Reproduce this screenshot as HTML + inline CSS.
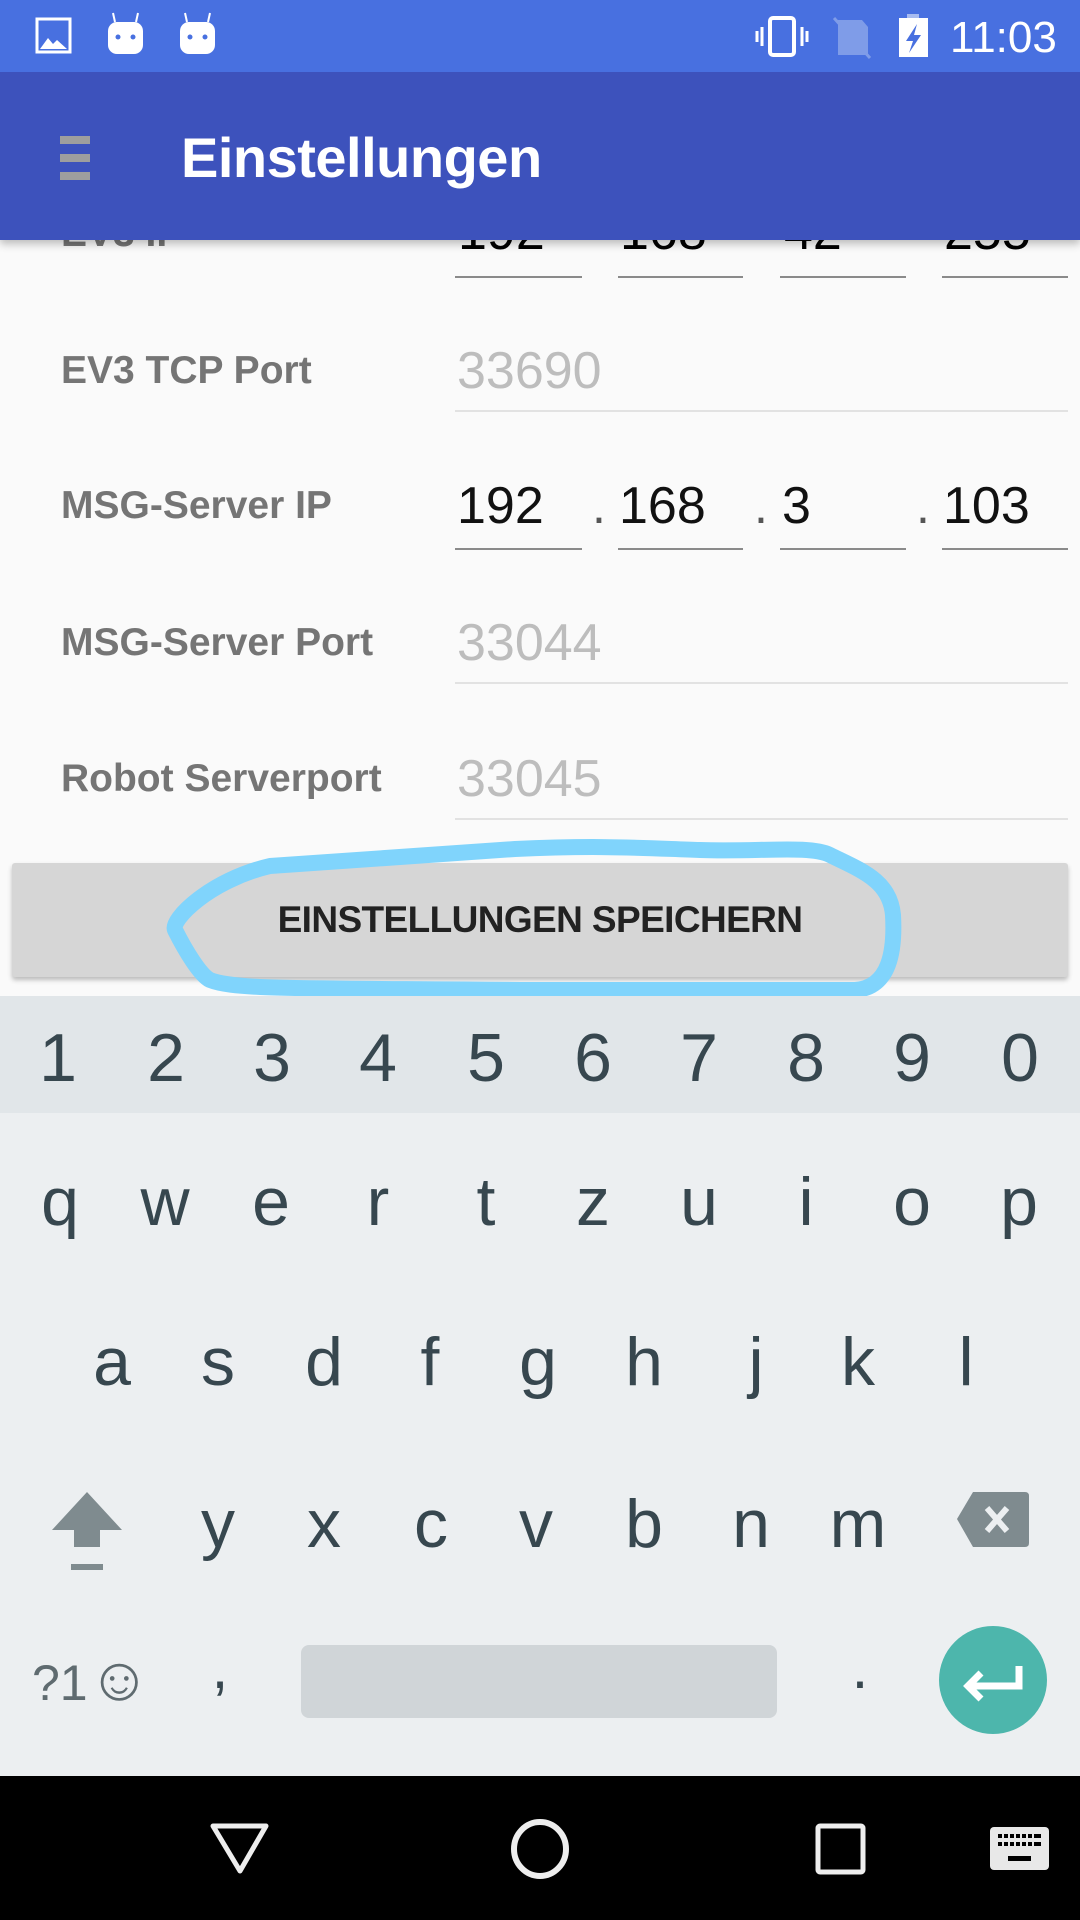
<!DOCTYPE html>
<html><head><meta charset="utf-8"><style>
*{margin:0;padding:0;box-sizing:border-box}
body{width:1080px;height:1920px;position:relative;overflow:hidden;background:#fafafa;font-family:"Liberation Sans",sans-serif}
.a{position:absolute}
.lbl{position:absolute;left:61px;font-size:39px;font-weight:bold;color:#757575;line-height:40px}
.val{position:absolute;font-size:52px;line-height:56px}
.ul{position:absolute;height:2px;background:#8a8a8a}
.ulg{position:absolute;height:2px;background:#e2e2e2;left:455px;width:613px}
.dot{position:absolute;font-size:50px;color:#555;line-height:56px}
.k{position:absolute;width:108px;text-align:center;font-size:68px;color:#37474f;line-height:80px}
</style></head><body>
<div class="lbl" style="top:214px;">EV3 IP</div>
<div class="val" style="left:458px;top:204px">192</div>
<div class="val" style="left:620px;top:204px">168</div>
<div class="val" style="left:784px;top:204px">42</div>
<div class="val" style="left:944px;top:204px">255</div>
<div class="ul" style="left:455px;top:276px;width:127px"></div>
<div class="ul" style="left:618px;top:276px;width:125px"></div>
<div class="ul" style="left:780px;top:276px;width:126px"></div>
<div class="ul" style="left:942px;top:276px;width:126px"></div>

<div class="lbl" style="top:351px">EV3 TCP Port</div>
<div class="val" style="left:457px;top:343px;color:#bdbdbd">33690</div>
<div class="ulg" style="top:410px"></div>

<div class="lbl" style="top:486px">MSG-Server IP</div>
<div class="val" style="left:457px;top:478px;color:#111">192</div>
<div class="dot" style="left:592px;top:478px">.</div>
<div class="val" style="left:619px;top:478px;color:#111">168</div>
<div class="dot" style="left:754px;top:478px">.</div>
<div class="val" style="left:782px;top:478px;color:#111">3</div>
<div class="dot" style="left:916px;top:478px">.</div>
<div class="val" style="left:943px;top:478px;color:#111">103</div>
<div class="ul" style="left:455px;top:548px;width:127px"></div>
<div class="ul" style="left:618px;top:548px;width:125px"></div>
<div class="ul" style="left:780px;top:548px;width:126px"></div>
<div class="ul" style="left:942px;top:548px;width:126px"></div>

<div class="lbl" style="top:623px">MSG-Server Port</div>
<div class="val" style="left:457px;top:615px;color:#bdbdbd">33044</div>
<div class="ulg" style="top:682px"></div>

<div class="lbl" style="top:759px">Robot Serverport</div>
<div class="val" style="left:457px;top:751px;color:#bdbdbd">33045</div>
<div class="ulg" style="top:818px"></div>

<div class="a" style="left:12px;top:863px;width:1056px;height:114px;background:#d6d6d6;border-radius:3px;box-shadow:0 3px 5px rgba(0,0,0,.25)"></div>
<div class="a" style="left:12px;top:863px;width:1056px;height:114px;line-height:114px;text-align:center;font-size:37px;font-weight:bold;color:#222;letter-spacing:-0.6px">EINSTELLUNGEN SPEICHERN</div>
<svg class="a" style="left:0;top:820px" width="1080" height="200" viewBox="0 820 1080 200">
<path d="M515 849 L270 866 C210 880 170 920 175 930 C185 950 200 975 210 980 C235 990 300 988 520 990 L855 990 C890 988 895 950 893 915 C890 880 860 870 830 855 C810 845 760 852 700 850 C640 848 600 845 515 849 Z" fill="none" stroke="#80d4fc" stroke-width="16" stroke-linejoin="round"/>
</svg>

<div class="a" style="left:0;top:996px;width:1080px;height:117px;background:#e1e6e9"></div>
<div class="a" style="left:0;top:1113px;width:1080px;height:663px;background:#eceff1"></div>
<div class="k" style="left:4px;top:1018px">1</div><div class="k" style="left:112px;top:1018px">2</div><div class="k" style="left:218px;top:1018px">3</div><div class="k" style="left:324px;top:1018px">4</div><div class="k" style="left:432px;top:1018px">5</div><div class="k" style="left:539px;top:1018px">6</div><div class="k" style="left:645px;top:1018px">7</div><div class="k" style="left:752px;top:1018px">8</div><div class="k" style="left:858px;top:1018px">9</div><div class="k" style="left:966px;top:1018px">0</div>
<div class="k" style="left:6px;top:1162px">q</div><div class="k" style="left:111px;top:1162px">w</div><div class="k" style="left:217px;top:1162px">e</div><div class="k" style="left:324px;top:1162px">r</div><div class="k" style="left:432px;top:1162px">t</div><div class="k" style="left:539px;top:1162px">z</div><div class="k" style="left:645px;top:1162px">u</div><div class="k" style="left:752px;top:1162px">i</div><div class="k" style="left:858px;top:1162px">o</div><div class="k" style="left:965px;top:1162px">p</div>
<div class="k" style="left:58px;top:1322px">a</div><div class="k" style="left:164px;top:1322px">s</div><div class="k" style="left:270px;top:1322px">d</div><div class="k" style="left:376px;top:1322px">f</div><div class="k" style="left:484px;top:1322px">g</div><div class="k" style="left:590px;top:1322px">h</div><div class="k" style="left:702px;top:1322px">j</div><div class="k" style="left:804px;top:1322px">k</div><div class="k" style="left:912px;top:1322px">l</div>
<div class="k" style="left:164px;top:1484px">y</div><div class="k" style="left:270px;top:1484px">x</div><div class="k" style="left:377px;top:1484px">c</div><div class="k" style="left:482px;top:1484px">v</div><div class="k" style="left:590px;top:1484px">b</div><div class="k" style="left:697px;top:1484px">n</div><div class="k" style="left:804px;top:1484px">m</div>
<svg class="a" style="left:50px;top:1490px" width="74" height="82"><path d="M37 2 L72 40 L50 40 L50 57 L24 57 L24 40 L2 40 Z" fill="#7f8b8f"/><rect x="21" y="74" width="32" height="6" fill="#7f8b8f"/></svg>
<svg class="a" style="left:957px;top:1492px" width="72" height="55"><path d="M16 0 L68 0 Q72 0 72 4 L72 51 Q72 55 68 55 L16 55 L0 27 Z" fill="#7f8b8f"/><path d="M30 16 L50 39 M50 16 L30 39" stroke="#eceff1" stroke-width="6"/></svg>
<div class="a" style="left:32px;top:1652px;font-size:50px;color:#5f6b70;line-height:56px">?1<span style="font-size:62px">☺</span></div>
<div class="k" style="left:166px;top:1628px;font-size:60px">,</div>
<div class="a" style="left:301px;top:1645px;width:476px;height:73px;background:#d0d5d8;border-radius:8px"></div>
<div class="k" style="left:806px;top:1628px;font-size:60px">.</div>
<div class="a" style="left:939px;top:1626px;width:108px;height:108px;border-radius:50%;background:#4db6ac"></div>
<svg class="a" style="left:939px;top:1626px" width="108" height="108"><path d="M80 40 L80 60 L30 60 M42 47 L29 60 L42 73" fill="none" stroke="#fff" stroke-width="7"/></svg>

<div class="a" style="left:0;top:1776px;width:1080px;height:144px;background:#000"></div>
<svg class="a" style="left:0;top:1776px" width="1080" height="144">
<path d="M213 50 L266 50 L240 95 Z" fill="none" stroke="#eee" stroke-width="5" stroke-linejoin="round"/>
<ellipse cx="540" cy="73" rx="26" ry="27" fill="none" stroke="#eee" stroke-width="6"/>
<rect x="818" y="50" width="45" height="46" rx="2" fill="none" stroke="#eee" stroke-width="5"/>
<rect x="990" y="51" width="59" height="43" rx="4" fill="#e8e8e8"/>
<g fill="#000"><rect x="998" y="58" width="43" height="4"/><rect x="998" y="66" width="43" height="4"/><rect x="1008" y="80" width="23" height="5"/></g>
<g stroke="#e8e8e8" stroke-width="2"><line x1="1003" y1="56" x2="1003" y2="72"/><line x1="1009" y1="56" x2="1009" y2="72"/><line x1="1015" y1="56" x2="1015" y2="72"/><line x1="1021" y1="56" x2="1021" y2="72"/><line x1="1027" y1="56" x2="1027" y2="72"/><line x1="1033" y1="56" x2="1033" y2="72"/></g>
</svg>

<div class="a" style="left:0;top:72px;width:1080px;height:168px;background:#3d52bc;box-shadow:0 4px 8px rgba(0,0,0,.25)"></div>
<div class="a" style="left:60px;top:136px;width:30px;height:8px;background:#9e9e9e"></div>
<div class="a" style="left:60px;top:154px;width:30px;height:8px;background:#9e9e9e"></div>
<div class="a" style="left:60px;top:172px;width:30px;height:8px;background:#9e9e9e"></div>
<div class="a" style="left:181px;top:126px;font-size:56px;font-weight:bold;color:#fff;line-height:64px;letter-spacing:-0.5px">Einstellungen</div>

<div class="a" style="left:0;top:0;width:1080px;height:72px;background:#4870e0"></div>
<svg class="a" style="left:0;top:0" width="1080" height="72">
<rect x="37" y="19" width="33" height="33" fill="none" stroke="#fff" stroke-width="3"/>
<path d="M40 49 L48 38 L53 44 L57 40 L67 49 Z" fill="#fff"/>
<g fill="#fff"><rect x="108" y="22" width="35" height="32" rx="9"/><rect x="180" y="22" width="35" height="32" rx="9"/></g>
<g stroke="#fff" stroke-width="2"><line x1="115" y1="22" x2="113" y2="13"/><line x1="136" y1="22" x2="138" y2="13"/><line x1="187" y1="22" x2="185" y2="13"/><line x1="208" y1="22" x2="210" y2="13"/></g>
<g fill="#4870e0"><circle cx="118" cy="37" r="2.5"/><circle cx="133" cy="37" r="2.5"/><circle cx="190" cy="37" r="2.5"/><circle cx="205" cy="37" r="2.5"/></g>
<rect x="770" y="18" width="24" height="37" rx="3" fill="none" stroke="#fff" stroke-width="4"/>
<g stroke="#fff" stroke-width="3"><line x1="762" y1="27" x2="762" y2="46"/><line x1="802" y1="27" x2="802" y2="46"/><line x1="757" y1="31" x2="757" y2="42"/><line x1="807" y1="31" x2="807" y2="42"/></g>
<path d="M838 20 L862 20 L868 27 L868 55 L838 55 Z" fill="#7f9ce8"/>
<line x1="834" y1="18" x2="870" y2="58" stroke="#7f9ce8" stroke-width="3"/>
<rect x="907" y="14" width="12" height="6" fill="#a8bcf0"/>
<rect x="899" y="18" width="29" height="39" fill="#fff"/>
<path d="M917 24 L906 41 L913 41 L909 53 L921 35 L914 35 Z" fill="#4870e0"/>
</svg>
<div class="a" style="left:950px;top:13px;font-size:44px;color:#fff;line-height:50px">11:03</div>
</body></html>
